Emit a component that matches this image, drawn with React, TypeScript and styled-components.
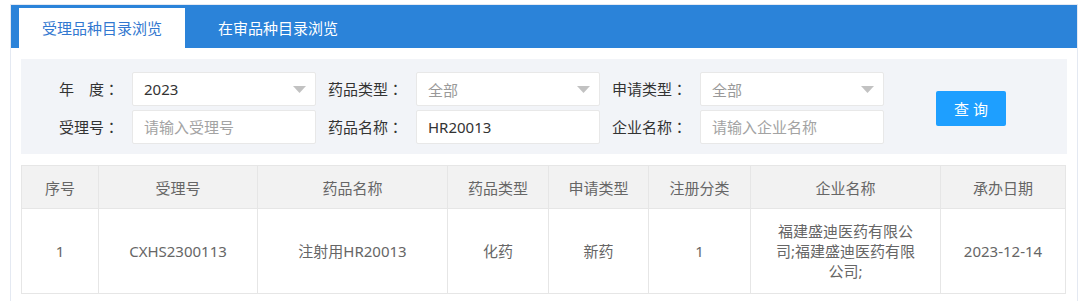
import React from "react";
import styled, { createGlobalStyle } from "styled-components";

const GlobalStyle = createGlobalStyle`
  html, body {
    margin: 0;
    padding: 0;
    background: #fff;
  }
  body {
    font-family: "Noto Sans", "Noto Sans CJK SC", sans-serif;
    font-size: 15px;
    color: #333;
  }
`;

interface Row {
  no: number;
  acceptNo: string;
  drugName: string;
  drugType: string;
  applyType: string;
  regClass: string;
  company: string;
  date: string;
}

const columns = [
  { title: "序号", width: 77 },
  { title: "受理号", width: 159 },
  { title: "药品名称", width: 190 },
  { title: "药品类型", width: 101 },
  { title: "申请类型", width: 100 },
  { title: "注册分类", width: 102 },
  { title: "企业名称", width: 190 },
  { title: "承办日期", width: 125 },
];

const rows: Row[] = [
  {
    no: 1,
    acceptNo: "CXHS2300113",
    drugName: "注射用HR20013",
    drugType: "化药",
    applyType: "新药",
    regClass: "1",
    company: "福建盛迪医药有限公司;福建盛迪医药有限公司;",
    date: "2023-12-14",
  },
];

function Caret() {
  return (
    <svg width="13" height="7" viewBox="0 0 13 7">
      <path d="M0 0 H13 L6.5 7 Z" fill="#c2c2c2" />
    </svg>
  );
}

function FieldLabel({ text }: { text: string }) {
  return (
    <Label>
      {text}
      <Colon>：</Colon>
    </Label>
  );
}

function App() {
  return (
    <>
      <GlobalStyle />
      <Page>
        <Panel>
          <TabBar>
            <Tab $active>受理品种目录浏览</Tab>
            <Tab>在审品种目录浏览</Tab>
          </TabBar>
          <Content>
            <Filter>
              <Fields>
                <FieldLabel text={"年\u3000度"} />
                <Select>
                  <Value>2023</Value>
                  <Caret />
                </Select>
                <FieldLabel text="药品类型" />
                <Select>
                  <Value $muted>全部</Value>
                  <Caret />
                </Select>
                <FieldLabel text="申请类型" />
                <Select>
                  <Value $muted>全部</Value>
                  <Caret />
                </Select>

                <FieldLabel text="受理号" />
                <Input placeholder="请输入受理号" />
                <FieldLabel text="药品名称" />
                <Input defaultValue="HR20013" />
                <FieldLabel text="企业名称" />
                <Input placeholder="请输入企业名称" />
              </Fields>
              <SearchButton>查询</SearchButton>
            </Filter>

            <Table>
              <colgroup>
                {columns.map((c) => (
                  <col key={c.title} style={{ width: c.width }} />
                ))}
              </colgroup>
              <thead>
                <tr>
                  {columns.map((c) => (
                    <Th key={c.title}>{c.title}</Th>
                  ))}
                </tr>
              </thead>
              <tbody>
                {rows.map((r) => (
                  <tr key={r.no}>
                    <Td>{r.no}</Td>
                    <Td>{r.acceptNo}</Td>
                    <Td>{r.drugName}</Td>
                    <Td>{r.drugType}</Td>
                    <Td>{r.applyType}</Td>
                    <Td>{r.regClass}</Td>
                    <Td $wide>{r.company}</Td>
                    <Td>{r.date}</Td>
                  </tr>
                ))}
              </tbody>
            </Table>
          </Content>
        </Panel>
      </Page>
    </>
  );
}

export default App;

const Page = styled.div`
  padding: 4px 2px 0 10px;
  height: 301px;
  box-sizing: border-box;
  overflow: hidden;
`;

const Panel = styled.div`
  width: 1068px;
  height: 320px;
  box-sizing: border-box;
  border: 1px solid #e4e9f2;
  border-bottom: none;
`;

const TabBar = styled.div`
  display: flex;
  align-items: flex-end;
  gap: 10px;
  height: 43px;
  padding-left: 8px;
  background: #2b83d9;
`;

const Tab = styled.div<{ $active?: boolean }>`
  height: 40px;
  line-height: 40px;
  padding: 0 23px;
  font-size: 15px;
  font-family: "Noto Sans CJK SC", sans-serif;
  color: ${({ $active }) => ($active ? "#3278d0" : "#fff")};
  background: ${({ $active }) => ($active ? "#fff" : "transparent")};
`;

const Content = styled.div`
  padding: 11px 10px 0 10px;
`;

const Filter = styled.div`
  display: flex;
  align-items: center;
  background: #f2f4f8;
  padding: 13px 0 10px 0;
`;

const Fields = styled.div`
  display: grid;
  grid-template-columns: 111px 184px 100px 184px 100px 184px;
  grid-auto-rows: 34px;
  row-gap: 4px;
`;

const Label = styled.div`
  text-align: right;
  padding-right: 13px;
  line-height: 34px;
  font-family: "Noto Sans CJK SC", sans-serif;
  font-size: 15px;
  color: #333;
  white-space: nowrap;
`;

const Colon = styled.span`
  font-family: "Noto Sans CJK TC", sans-serif;
`;

const Select = styled.div`
  display: flex;
  align-items: center;
  justify-content: space-between;
  box-sizing: border-box;
  height: 34px;
  padding: 0 9px 0 11px;
  background: #fff;
  border: 1px solid #e8e8e8;
  border-radius: 2px;
`;

const Value = styled.span<{ $muted?: boolean }>`
  font-size: 15px;
  color: ${({ $muted }) => ($muted ? "#999" : "#333")};
`;

const Input = styled.input`
  box-sizing: border-box;
  height: 34px;
  width: 100%;
  padding: 0 11px;
  background: #fff;
  border: 1px solid #e8e8e8;
  border-radius: 2px;
  outline: none;
  font-family: "Noto Sans", "Noto Sans CJK SC", sans-serif;
  font-size: 15px;
  color: #333;

  &::placeholder {
    color: #a3a3a3;
  }
`;

const SearchButton = styled.button`
  margin-left: 52px;
  width: 70px;
  height: 35px;
  border: none;
  border-radius: 2px;
  background: #1e9fff;
  color: #fff;
  font-family: "Noto Sans CJK SC", sans-serif;
  font-size: 15px;
  letter-spacing: 4px;
  text-indent: 4px;
  cursor: pointer;
`;

const Table = styled.table`
  margin-top: 11px;
  width: 1044px;
  table-layout: fixed;
  border-collapse: collapse;
  color: #666;
  font-size: 15px;
`;

const Th = styled.th`
  height: 42px;
  padding: 0 10px;
  font-weight: normal;
  background: #f2f2f2;
  border: 1px solid #e6e6e6;
  font-family: "Noto Sans CJK SC", sans-serif;
`;

const Td = styled.td<{ $wide?: boolean }>`
  height: 84px;
  padding: 0 ${({ $wide }) => ($wide ? "22px" : "10px")};
  text-align: center;
  line-height: 20px;
  border: 1px solid #e6e6e6;
  word-break: break-all;
`;
